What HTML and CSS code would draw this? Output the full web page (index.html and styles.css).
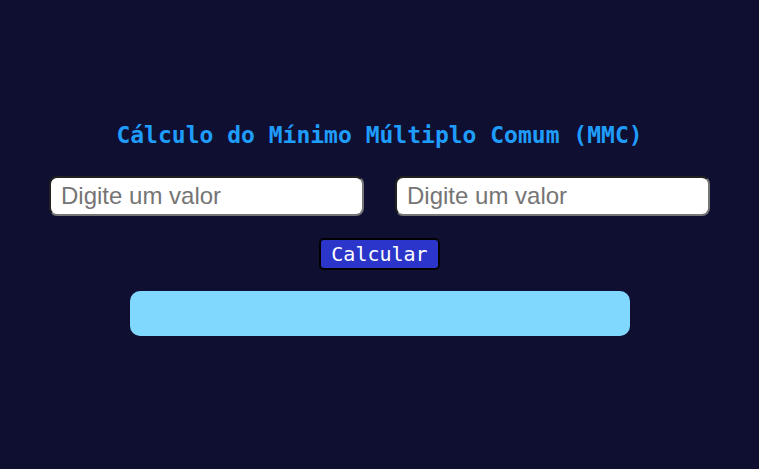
FILE: index.html
```html
<!DOCTYPE html>
<html lang="pt-BR">
<head>
<meta charset="utf-8">
<title>MMC</title>
<link rel="stylesheet" href="styles.css">
</head>
<body>
<main class="app">
  <h1 class="title">Cálculo do Mínimo Múltiplo Comum (MMC)</h1>
  <div class="inputs">
    <input class="field" type="number" placeholder="Digite um valor">
    <input class="field" type="number" placeholder="Digite um valor">
  </div>
  <button class="btn" type="button">Calcular</button>
  <div class="result"></div>
</main>
</body>
</html>
```
FILE: styles.css
```css
html, body {
  margin: 0;
  padding: 0;
  height: 100%;
}
body {
  background: #0f0f32;
  font-family: "DejaVu Sans Mono", monospace;
}
.app {
  display: flex;
  flex-direction: column;
  align-items: center;
  padding-top: 122px;
}
.title {
  margin: 0;
  font-size: 23px;
  line-height: 27px;
  font-weight: bold;
  color: #1f9dfd;
}
.inputs {
  display: flex;
  gap: 31px;
  margin-top: 27px;
}
.field {
  box-sizing: border-box;
  width: 315px;
  height: 40px;
  border: 2px inset #767676;
  border-radius: 8px;
  padding: 0 10px;
  font-family: "Liberation Sans", Arial, sans-serif;
  font-size: 24px;
  background: #fff;
  outline: none;
}
.field::placeholder {
  color: #757575;
}
.btn {
  margin-top: 22px;
  box-sizing: border-box;
  height: 32px;
  padding: 0 10px;
  border: 2px solid #000;
  border-radius: 5px;
  background: #2b35c9;
  color: #fff;
  font-family: "DejaVu Sans Mono", monospace;
  font-size: 20px;
}
.result {
  margin-top: 21px;
  width: 500px;
  height: 45px;
  border-radius: 10px;
  background: #80d8ff;
}
```
